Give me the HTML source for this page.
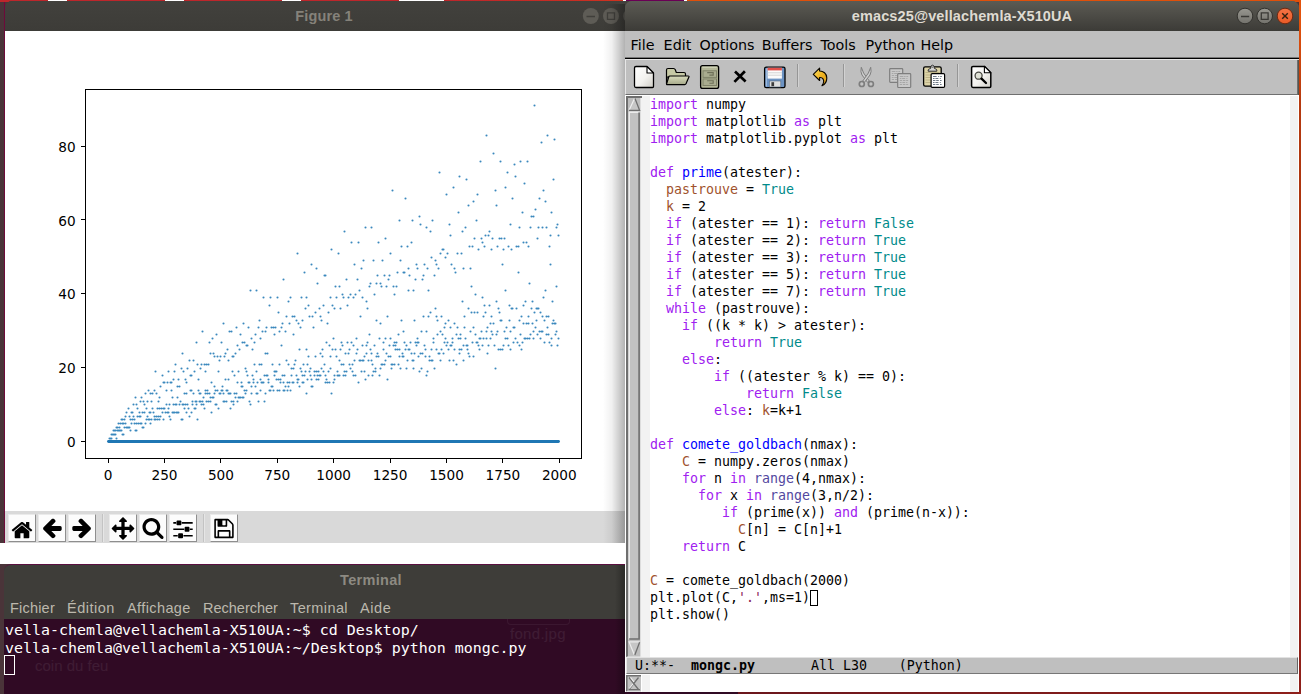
<!DOCTYPE html>
<html lang="fr">
<head>
<meta charset="utf-8">
<title>Figure 1 / emacs / Terminal</title>
<style>
*{box-sizing:border-box;margin:0;padding:0}
html,body{width:1301px;height:694px;overflow:hidden}
body{position:relative;background:#4a3439;font-family:"Liberation Sans","DejaVu Sans",sans-serif}
.abs{position:absolute}
/* desktop slivers */
#topstrip{left:0;top:0;width:1301px;height:2px;background:linear-gradient(90deg,#bd262b 0,#bd262b 48px,#fff 48px,#fff 67px,#bd262b 67px,#bd262b 165px,#fff 165px,#fff 184px,#bd262b 184px,#bd262b 282px,#fff 282px,#fff 301px,#bd262b 301px,#bd262b 399px,#fff 399px,#fff 444px,#bd262b 444px,#c92e22 585px,#d0321e 623px,#fff 623px,#fff 626px,#6a0055 626px,#6a0055 684px,#fff 684px,#fff 687px,#e0500a 687px)}
#rstrip{left:1299px;top:0;width:2px;height:694px;background:linear-gradient(#e2520c 0,#e2520c 3%,#b5390f 15%,#a02c0a 50%,#8e1f1a 100%)}
#bstrip{left:625px;top:692px;width:676px;height:2px;background:linear-gradient(90deg,#64141c,#8e1f1a)}
#lcol{left:4px;top:2px;width:1px;height:541px;background:#6e0a3a}
#whiteband{left:0;top:543px;width:626px;height:21px;background:#fff}
/* Figure window */
#fig{left:5px;top:1px;width:638px;height:542px;background:#403f3b;border-radius:7px 7px 0 0;overflow:hidden}
.tbar{left:0;top:0;width:100%;height:30px;text-align:center;font-weight:bold;font-size:14.5px;line-height:30px;letter-spacing:.12px}
#fig .tbar{background:linear-gradient(#42413d,#3d3c38);color:#85827a}
#figcanvas{left:0;top:30px;width:640px;height:480px}
#mpltb{left:0;top:510px;width:638px;height:32px;background:#d9d9d9}
.mb{position:absolute;top:3px;width:28px;height:28px;margin-left:-1px;background:#fcfcfc;border:1px solid;border-color:#eaeaea #8e8e8e #8e8e8e #eaeaea}
.mb svg{position:absolute;left:1px;top:1px;width:24px;height:24px}
.msep{position:absolute;top:3px;width:2px;height:28px;background:linear-gradient(90deg,#c3c3c3 50%,#e6e6e6 50%)}
/* Terminal */
#term{left:4px;top:564px;width:734px;height:130px;background:#3e3d39;border-radius:7px 7px 0 0;overflow:hidden;border-top:1px solid #5a1040}
#term .tbar{background:#3e3d39;color:#8d8a82;height:30px;line-height:31px}
#tmenu{left:0;top:29px;width:100%;height:25px;background:#3e3d39;color:#bcb8ad;font-size:14.5px;line-height:27px;white-space:pre}
#tmenu span{position:absolute;top:1px}
#tpurple{left:0;top:54px;width:100%;height:80px;background:#300a24}
#tbody{left:1px;top:56px;color:#fff;font-family:"DejaVu Sans Mono","Liberation Mono",monospace;font-size:14.95px;line-height:18px;white-space:pre}
.ghost{position:absolute;color:#fff;opacity:.07;font-size:15px}
/* Emacs */
#emshadow{left:603px;top:4px;width:22px;height:539px;background:linear-gradient(90deg,rgba(0,0,0,0),rgba(0,0,0,.06) 40%,rgba(0,0,0,.3))}
#emacs{left:625px;top:1px;width:674px;height:691px;background:#55544d;border-radius:7px 7px 0 0;overflow:hidden}
#emacs .tbar{background:linear-gradient(#5c5b54,#3c3b37);color:#dfdbd2}
#emenu{left:0;top:30px;width:100%;height:27px;background:#bfbfbf;font-family:"DejaVu Sans","Liberation Sans",sans-serif;font-size:14.3px;line-height:27px;color:#000;white-space:pre}
#emenu span{position:absolute;top:1px}
#eline{left:0;top:56px;width:100%;height:3px;background:linear-gradient(#777 0,#777 33.3%,#000 33.3%,#000 66.6%,#e6e6e6 66.6%)}
#etool{left:0;top:59px;width:673px;height:35px;background:#bfbfbf;border-bottom:1px solid #6f6f6f;border-right:1px solid #6f6f6f;border-left:1px solid #e6e6e6}
#ebody{left:0;top:94px;width:100%;height:597px;background:#fff}
#efringeL{left:17px;top:95px;width:8px;height:562px;background:#f2f2f2}
#efringeR{left:665px;top:95px;width:8px;height:596px;background:#f2f2f2}
#ecode{left:25px;top:95px;font-family:"DejaVu Sans Mono","Liberation Mono",monospace;font-size:13.29px;line-height:17px;white-space:pre;color:#000}
.ln{height:17px}
.k{color:#a020f0}.f{color:#0000ff}.v{color:#a0522d}.c{color:#008b8b}.s{color:#8b2252}.b{color:#5348a0}
.cur{display:inline-block;width:8px;height:16px;border:1px solid #000;vertical-align:top;margin:1px -8px 0 0}
#emode{left:1px;top:656px;width:672px;height:17px;background:#bfbfbf;border:1px solid;border-color:#e2e2e2 #666 #777 #e5e5e5;font-family:"DejaVu Sans Mono","Liberation Mono",monospace;font-size:13.29px;line-height:15px;white-space:pre;color:#000}
#emode b{font-weight:bold}
</style>
</head>
<body>
<div id="topstrip" class="abs"></div>
<div id="rstrip" class="abs"></div>
<div id="bstrip" class="abs"></div>
<div id="lcol" class="abs"></div>
<div id="whiteband" class="abs"></div>

<div id="fig" class="abs">
  <div class="tbar abs">Figure 1</div>
  <svg class="abs" style="left:575px;top:5px" width="60" height="22" viewBox="580 6 60 22"><g fill="#5e5c56"><circle cx="590.8" cy="16" r="8"/><circle cx="611" cy="16" r="8"/><circle cx="631.2" cy="16" r="8"/></g><path d="M586.5 16.5h8.5M607.5 12.8h7v6.6h-7z" stroke="#403f3b" stroke-width="1.3" fill="none"/></svg>
  <div id="figcanvas" class="abs"><svg class="plot" width="640" height="480" viewBox="0 0 640 480">
<rect width="640" height="480" fill="#fff"/>
<path d="M104.5 407.5h0M105.5 407.5h0M105.5 407.5h0M106.5 407.5h0M106.5 403.5h0M107.5 403.5h0M107.5 403.5h0M108.5 403.5h0M108.5 399.5h0M108.5 403.5h0M109.5 403.5h0M109.5 399.5h0M110.5 403.5h0M110.5 399.5h0M111.5 396.5h0M111.5 407.5h0M112.5 399.5h0M112.5 396.5h0M112.5 399.5h0M113.5 399.5h0M113.5 392.5h0M114.5 396.5h0M114.5 399.5h0M115.5 392.5h0M115.5 399.5h0M116.5 399.5h0M116.5 388.5h0M117.5 403.5h0M117.5 392.5h0M117.5 388.5h0M118.5 403.5h0M118.5 392.5h0M119.5 388.5h0M119.5 396.5h0M120.5 392.5h0M120.5 385.5h0M121.5 396.5h0M121.5 396.5h0M121.5 381.5h0M122.5 396.5h0M122.5 396.5h0M123.5 377.5h0M123.5 396.5h0M124.5 396.5h0M124.5 385.5h0M125.5 399.5h0M125.5 388.5h0M126.5 381.5h0M126.5 392.5h0M126.5 392.5h0M127.5 381.5h0M127.5 388.5h0M128.5 385.5h0M128.5 373.5h0M129.5 388.5h0M129.5 392.5h0M130.5 366.5h0M130.5 399.5h0M131.5 392.5h0M131.5 373.5h0M131.5 399.5h0M132.5 385.5h0M132.5 377.5h0M133.5 392.5h0M133.5 392.5h0M134.5 381.5h0M134.5 385.5h0M135.5 385.5h0M135.5 370.5h0M135.5 392.5h0M136.5 392.5h0M136.5 366.5h0M137.5 396.5h0M137.5 381.5h0M138.5 370.5h0M138.5 396.5h0M139.5 381.5h0M139.5 373.5h0M140.5 392.5h0M140.5 392.5h0M140.5 362.5h0M141.5 377.5h0M141.5 388.5h0M142.5 370.5h0M142.5 385.5h0M143.5 388.5h0M143.5 359.5h0M144.5 388.5h0M144.5 381.5h0M145.5 362.5h0M145.5 392.5h0M145.5 381.5h0M146.5 370.5h0M146.5 388.5h0M147.5 377.5h0M147.5 362.5h0M148.5 381.5h0M148.5 381.5h0M149.5 359.5h0M149.5 388.5h0M149.5 385.5h0M150.5 340.5h0M150.5 388.5h0M151.5 385.5h0M151.5 362.5h0M152.5 388.5h0M152.5 377.5h0M153.5 370.5h0M153.5 385.5h0M154.5 388.5h0M154.5 366.5h0M154.5 377.5h0M155.5 385.5h0M155.5 355.5h0M156.5 377.5h0M156.5 377.5h0M157.5 344.5h0M157.5 381.5h0M158.5 377.5h0M158.5 351.5h0M158.5 388.5h0M159.5 377.5h0M159.5 351.5h0M160.5 381.5h0M160.5 381.5h0M161.5 359.5h0M161.5 373.5h0M162.5 381.5h0M162.5 351.5h0M163.5 381.5h0M163.5 377.5h0M163.5 340.5h0M164.5 385.5h0M164.5 373.5h0M165.5 351.5h0M165.5 388.5h0M166.5 359.5h0M166.5 351.5h0M167.5 381.5h0M167.5 366.5h0M168.5 348.5h0M168.5 373.5h0M168.5 381.5h0M169.5 340.5h0M169.5 381.5h0M170.5 373.5h0M170.5 333.5h0M171.5 381.5h0M171.5 373.5h0M172.5 355.5h0M172.5 381.5h0M172.5 366.5h0M173.5 348.5h0M173.5 381.5h0M174.5 373.5h0M174.5 355.5h0M175.5 370.5h0M175.5 370.5h0M176.5 337.5h0M176.5 388.5h0M177.5 373.5h0M177.5 322.5h0M177.5 388.5h0M178.5 373.5h0M178.5 340.5h0M179.5 377.5h0M179.5 362.5h0M180.5 348.5h0M180.5 373.5h0M181.5 381.5h0M181.5 351.5h0M181.5 362.5h0M182.5 373.5h0M182.5 337.5h0M183.5 377.5h0M183.5 377.5h0M184.5 329.5h0M184.5 385.5h0M185.5 359.5h0M185.5 344.5h0M186.5 381.5h0M186.5 359.5h0M186.5 344.5h0M187.5 373.5h0M187.5 370.5h0M188.5 329.5h0M188.5 362.5h0M189.5 377.5h0M189.5 340.5h0M190.5 370.5h0M190.5 377.5h0M191.5 311.5h0M191.5 370.5h0M191.5 373.5h0M192.5 333.5h0M192.5 388.5h0M193.5 359.5h0M193.5 348.5h0M194.5 370.5h0M194.5 362.5h0M195.5 337.5h0M195.5 362.5h0M195.5 370.5h0M196.5 333.5h0M196.5 373.5h0M197.5 370.5h0M197.5 300.5h0M198.5 373.5h0M198.5 366.5h0M199.5 333.5h0M199.5 377.5h0M200.5 359.5h0M200.5 340.5h0M200.5 362.5h0M201.5 370.5h0M201.5 333.5h0M202.5 359.5h0M202.5 362.5h0M203.5 333.5h0M203.5 370.5h0M204.5 362.5h0M204.5 311.5h0M205.5 366.5h0M205.5 370.5h0M205.5 322.5h0M206.5 381.5h0M206.5 351.5h0M207.5 307.5h0M207.5 366.5h0M208.5 366.5h0M208.5 322.5h0M209.5 355.5h0M209.5 362.5h0M209.5 325.5h0M210.5 359.5h0M210.5 373.5h0M211.5 303.5h0M211.5 373.5h0M212.5 359.5h0M212.5 325.5h0M213.5 377.5h0M213.5 340.5h0M214.5 329.5h0M214.5 362.5h0M214.5 362.5h0M215.5 325.5h0M215.5 362.5h0M216.5 359.5h0M216.5 311.5h0M217.5 355.5h0M217.5 359.5h0M218.5 292.5h0M218.5 370.5h0M218.5 362.5h0M219.5 325.5h0M219.5 370.5h0M220.5 348.5h0M220.5 322.5h0M221.5 370.5h0M221.5 359.5h0M222.5 318.5h0M222.5 359.5h0M223.5 348.5h0M223.5 329.5h0M223.5 362.5h0M224.5 362.5h0M224.5 300.5h0M225.5 377.5h0M225.5 362.5h0M226.5 300.5h0M226.5 370.5h0M227.5 340.5h0M227.5 325.5h0M228.5 373.5h0M228.5 370.5h0M228.5 325.5h0M229.5 344.5h0M229.5 362.5h0M230.5 322.5h0M230.5 366.5h0M231.5 362.5h0M231.5 296.5h0M232.5 370.5h0M232.5 351.5h0M232.5 314.5h0M233.5 366.5h0M233.5 340.5h0M234.5 318.5h0M234.5 366.5h0M235.5 366.5h0M235.5 303.5h0M236.5 351.5h0M236.5 355.5h0M237.5 311.5h0M237.5 366.5h0M237.5 355.5h0M238.5 292.5h0M238.5 366.5h0M239.5 359.5h0M239.5 311.5h0M240.5 362.5h0M240.5 337.5h0M241.5 314.5h0M241.5 359.5h0M241.5 340.5h0M242.5 314.5h0M242.5 344.5h0M243.5 351.5h0M243.5 296.5h0M244.5 370.5h0M244.5 351.5h0M245.5 259.5h0M245.5 373.5h0M246.5 362.5h0M246.5 307.5h0M246.5 355.5h0M247.5 344.5h0M247.5 318.5h0M248.5 348.5h0M248.5 351.5h0M249.5 311.5h0M249.5 333.5h0M250.5 355.5h0M250.5 303.5h0M251.5 362.5h0M251.5 340.5h0M251.5 259.5h0M252.5 362.5h0M252.5 351.5h0M253.5 296.5h0M253.5 370.5h0M254.5 333.5h0M254.5 289.5h0M255.5 359.5h0M255.5 348.5h0M255.5 307.5h0M256.5 333.5h0M256.5 351.5h0M257.5 300.5h0M257.5 351.5h0M258.5 351.5h0M258.5 266.5h0M259.5 370.5h0M259.5 344.5h0M260.5 300.5h0M260.5 362.5h0M260.5 322.5h0M261.5 296.5h0M261.5 344.5h0M262.5 344.5h0M262.5 322.5h0M263.5 351.5h0M263.5 348.5h0M264.5 274.5h0M264.5 359.5h0M265.5 359.5h0M265.5 266.5h0M265.5 359.5h0M266.5 355.5h0M266.5 296.5h0M267.5 355.5h0M267.5 333.5h0M268.5 296.5h0M268.5 359.5h0M269.5 340.5h0M269.5 303.5h0M269.5 344.5h0M270.5 340.5h0M270.5 296.5h0M271.5 348.5h0M271.5 340.5h0M272.5 266.5h0M272.5 359.5h0M273.5 348.5h0M273.5 281.5h0M274.5 359.5h0M274.5 333.5h0M274.5 300.5h0M275.5 348.5h0M275.5 351.5h0M276.5 296.5h0M276.5 314.5h0M277.5 344.5h0M277.5 292.5h0M278.5 351.5h0M278.5 359.5h0M278.5 248.5h0M279.5 359.5h0M279.5 344.5h0M280.5 300.5h0M280.5 355.5h0M281.5 329.5h0M281.5 285.5h0M282.5 351.5h0M282.5 359.5h0M283.5 270.5h0M283.5 333.5h0M283.5 355.5h0M284.5 292.5h0M284.5 351.5h0M285.5 359.5h0M285.5 266.5h0M286.5 344.5h0M286.5 337.5h0M287.5 285.5h0M287.5 351.5h0M288.5 337.5h0M288.5 303.5h0M288.5 351.5h0M289.5 333.5h0M289.5 285.5h0M290.5 329.5h0M290.5 329.5h0M291.5 289.5h0M291.5 344.5h0M292.5 351.5h0M292.5 222.5h0M292.5 348.5h0M293.5 348.5h0M293.5 292.5h0M294.5 355.5h0M294.5 318.5h0M295.5 296.5h0M295.5 337.5h0M296.5 340.5h0M296.5 266.5h0M297.5 344.5h0M297.5 351.5h0M297.5 289.5h0M298.5 351.5h0M298.5 333.5h0M299.5 241.5h0M299.5 344.5h0M300.5 340.5h0M300.5 277.5h0M301.5 362.5h0M301.5 318.5h0M301.5 266.5h0M302.5 333.5h0M302.5 348.5h0M303.5 274.5h0M303.5 325.5h0M304.5 340.5h0M304.5 285.5h0M305.5 337.5h0M305.5 344.5h0M306.5 233.5h0M306.5 355.5h0M306.5 348.5h0M307.5 285.5h0M307.5 355.5h0M308.5 296.5h0M308.5 296.5h0M309.5 340.5h0M309.5 344.5h0M310.5 281.5h0M310.5 325.5h0M311.5 340.5h0M311.5 237.5h0M311.5 348.5h0M312.5 344.5h0M312.5 252.5h0M313.5 348.5h0M313.5 340.5h0M314.5 277.5h0M314.5 344.5h0M315.5 322.5h0M315.5 285.5h0M315.5 344.5h0M316.5 337.5h0M316.5 289.5h0M317.5 318.5h0M317.5 325.5h0M318.5 274.5h0M318.5 340.5h0M319.5 333.5h0M319.5 244.5h0M320.5 351.5h0M320.5 344.5h0M320.5 244.5h0M321.5 348.5h0M321.5 311.5h0M322.5 292.5h0M322.5 351.5h0M323.5 340.5h0M323.5 281.5h0M324.5 314.5h0M324.5 351.5h0M325.5 266.5h0M325.5 337.5h0M325.5 325.5h0M326.5 218.5h0M326.5 362.5h0M327.5 318.5h0M327.5 274.5h0M328.5 351.5h0M328.5 307.5h0M329.5 277.5h0M329.5 344.5h0M329.5 348.5h0M330.5 255.5h0M330.5 318.5h0M331.5 325.5h0M331.5 266.5h0M332.5 344.5h0M332.5 340.5h0M333.5 222.5h0M333.5 344.5h0M334.5 329.5h0M334.5 255.5h0M334.5 344.5h0M335.5 318.5h0M335.5 277.5h0M336.5 333.5h0M336.5 311.5h0M337.5 263.5h0M337.5 314.5h0M338.5 333.5h0M338.5 266.5h0M338.5 344.5h0M339.5 340.5h0M339.5 200.5h0M340.5 344.5h0M340.5 322.5h0M341.5 248.5h0M341.5 340.5h0M342.5 311.5h0M342.5 274.5h0M343.5 322.5h0M343.5 322.5h0M343.5 266.5h0M344.5 318.5h0M344.5 333.5h0M345.5 263.5h0M345.5 337.5h0M346.5 311.5h0M346.5 211.5h0M347.5 340.5h0M347.5 333.5h0M348.5 266.5h0M348.5 344.5h0M348.5 314.5h0M349.5 233.5h0M349.5 329.5h0M350.5 344.5h0M350.5 263.5h0M351.5 307.5h0M351.5 322.5h0M352.5 248.5h0M352.5 318.5h0M352.5 318.5h0M353.5 211.5h0M353.5 351.5h0M354.5 329.5h0M354.5 259.5h0M355.5 329.5h0M355.5 285.5h0M356.5 237.5h0M356.5 340.5h0M357.5 329.5h0M357.5 266.5h0M357.5 314.5h0M358.5 329.5h0M358.5 229.5h0M359.5 325.5h0M359.5 340.5h0M360.5 196.5h0M360.5 348.5h0M361.5 322.5h0M361.5 270.5h0M361.5 314.5h0M362.5 311.5h0M362.5 277.5h0M363.5 344.5h0M363.5 329.5h0M364.5 255.5h0M364.5 303.5h0M365.5 318.5h0M365.5 252.5h0M366.5 322.5h0M366.5 329.5h0M366.5 196.5h0M367.5 344.5h0M367.5 333.5h0M368.5 229.5h0M368.5 340.5h0M369.5 314.5h0M369.5 263.5h0M370.5 337.5h0M370.5 340.5h0M371.5 252.5h0M371.5 289.5h0M371.5 325.5h0M372.5 244.5h0M372.5 322.5h0M373.5 325.5h0M373.5 211.5h0M374.5 344.5h0M374.5 307.5h0M375.5 252.5h0M375.5 337.5h0M375.5 292.5h0M376.5 255.5h0M376.5 333.5h0M377.5 333.5h0M377.5 229.5h0M378.5 311.5h0M378.5 318.5h0M379.5 244.5h0M379.5 333.5h0M380.5 329.5h0M380.5 207.5h0M380.5 307.5h0M381.5 322.5h0M381.5 255.5h0M382.5 348.5h0M382.5 285.5h0M383.5 248.5h0M383.5 325.5h0M384.5 314.5h0M384.5 244.5h0M385.5 307.5h0M385.5 325.5h0M385.5 222.5h0M386.5 337.5h0M386.5 333.5h0M387.5 159.5h0M387.5 333.5h0M388.5 314.5h0M388.5 255.5h0M389.5 333.5h0M389.5 311.5h0M389.5 263.5h0M390.5 314.5h0M390.5 318.5h0M391.5 255.5h0M391.5 311.5h0M392.5 318.5h0M392.5 241.5h0M393.5 333.5h0M393.5 303.5h0M394.5 189.5h0M394.5 325.5h0M394.5 318.5h0M395.5 229.5h0M395.5 337.5h0M396.5 289.5h0M396.5 215.5h0M397.5 322.5h0M397.5 325.5h0M398.5 241.5h0M398.5 300.5h0M398.5 325.5h0M399.5 241.5h0M399.5 311.5h0M400.5 318.5h0M400.5 167.5h0M401.5 337.5h0M401.5 314.5h0M402.5 215.5h0M402.5 329.5h0M403.5 259.5h0M403.5 237.5h0M403.5 318.5h0M404.5 318.5h0M404.5 244.5h0M405.5 311.5h0M405.5 311.5h0M406.5 211.5h0M406.5 322.5h0M407.5 329.5h0M407.5 189.5h0M408.5 329.5h0M408.5 337.5h0M408.5 259.5h0M409.5 322.5h0M409.5 289.5h0M410.5 248.5h0M410.5 311.5h0M411.5 314.5h0M411.5 233.5h0M412.5 307.5h0M412.5 311.5h0M412.5 237.5h0M413.5 325.5h0M413.5 311.5h0M414.5 185.5h0M414.5 340.5h0M415.5 322.5h0M415.5 193.5h0M416.5 337.5h0M416.5 300.5h0M417.5 248.5h0M417.5 322.5h0M417.5 322.5h0M418.5 244.5h0M418.5 285.5h0M419.5 314.5h0M419.5 233.5h0M420.5 325.5h0M420.5 318.5h0M421.5 196.5h0M421.5 344.5h0M421.5 300.5h0M422.5 237.5h0M422.5 340.5h0M423.5 285.5h0M423.5 259.5h0M424.5 329.5h0M424.5 325.5h0M425.5 200.5h0M425.5 281.5h0M426.5 318.5h0M426.5 226.5h0M426.5 329.5h0M427.5 329.5h0M427.5 189.5h0M428.5 311.5h0M428.5 307.5h0M429.5 244.5h0M429.5 337.5h0M430.5 277.5h0M430.5 229.5h0M431.5 318.5h0M431.5 285.5h0M431.5 233.5h0M432.5 289.5h0M432.5 303.5h0M433.5 237.5h0M433.5 322.5h0M434.5 322.5h0M434.5 141.5h0M435.5 329.5h0M435.5 300.5h0M435.5 222.5h0M436.5 318.5h0M436.5 285.5h0M437.5 218.5h0M437.5 303.5h0M438.5 322.5h0M438.5 218.5h0M439.5 296.5h0M439.5 311.5h0M440.5 226.5h0M440.5 307.5h0M440.5 292.5h0M441.5 163.5h0M441.5 314.5h0M442.5 311.5h0M442.5 222.5h0M443.5 318.5h0M443.5 289.5h0M444.5 193.5h0M444.5 329.5h0M445.5 314.5h0M445.5 204.5h0M445.5 296.5h0M446.5 314.5h0M446.5 233.5h0M447.5 307.5h0M447.5 311.5h0M448.5 156.5h0M448.5 329.5h0M449.5 292.5h0M449.5 237.5h0M449.5 318.5h0M450.5 241.5h0M450.5 241.5h0M451.5 333.5h0M451.5 303.5h0M452.5 222.5h0M452.5 296.5h0M453.5 307.5h0M453.5 181.5h0M454.5 322.5h0M454.5 318.5h0M454.5 145.5h0M455.5 303.5h0M455.5 307.5h0M456.5 222.5h0M456.5 318.5h0M457.5 270.5h0M457.5 200.5h0M458.5 329.5h0M458.5 314.5h0M458.5 237.5h0M459.5 296.5h0M459.5 285.5h0M460.5 196.5h0M460.5 307.5h0M461.5 314.5h0M461.5 148.5h0M462.5 318.5h0M462.5 314.5h0M463.5 174.5h0M463.5 322.5h0M463.5 277.5h0M464.5 215.5h0M464.5 325.5h0M465.5 300.5h0M465.5 237.5h0M466.5 255.5h0M466.5 281.5h0M467.5 215.5h0M467.5 311.5h0M468.5 296.5h0M468.5 170.5h0M468.5 325.5h0M469.5 281.5h0M469.5 207.5h0M470.5 303.5h0M470.5 263.5h0M471.5 189.5h0M471.5 311.5h0M472.5 311.5h0M472.5 163.5h0M472.5 281.5h0M473.5 314.5h0M473.5 218.5h0M474.5 318.5h0M474.5 307.5h0M475.5 130.5h0M475.5 307.5h0M476.5 300.5h0M476.5 207.5h0M477.5 314.5h0M477.5 266.5h0M477.5 211.5h0M478.5 307.5h0M478.5 285.5h0M479.5 215.5h0M479.5 274.5h0M480.5 281.5h0M480.5 204.5h0M481.5 307.5h0M481.5 300.5h0M481.5 104.5h0M482.5 322.5h0M482.5 296.5h0M483.5 204.5h0M483.5 314.5h0M484.5 274.5h0M484.5 200.5h0M485.5 292.5h0M485.5 307.5h0M486.5 218.5h0M486.5 285.5h0M486.5 300.5h0M487.5 207.5h0M487.5 303.5h0M488.5 292.5h0M488.5 122.5h0M489.5 314.5h0M489.5 314.5h0M490.5 159.5h0M490.5 337.5h0M491.5 270.5h0M491.5 174.5h0M491.5 303.5h0M492.5 300.5h0M492.5 215.5h0M493.5 277.5h0M493.5 318.5h0M494.5 207.5h0M494.5 281.5h0M495.5 289.5h0M495.5 130.5h0M495.5 318.5h0M496.5 289.5h0M496.5 207.5h0M497.5 318.5h0M497.5 233.5h0M498.5 218.5h0M498.5 314.5h0M499.5 300.5h0M499.5 207.5h0M500.5 259.5h0M500.5 307.5h0M500.5 156.5h0M501.5 296.5h0M501.5 296.5h0M502.5 141.5h0M502.5 307.5h0M503.5 314.5h0M503.5 215.5h0M504.5 289.5h0M504.5 274.5h0M505.5 193.5h0M505.5 318.5h0M505.5 300.5h0M506.5 218.5h0M506.5 277.5h0M507.5 277.5h0M507.5 167.5h0M508.5 296.5h0M508.5 311.5h0M509.5 133.5h0M509.5 296.5h0M509.5 296.5h0M510.5 145.5h0M510.5 307.5h0M511.5 277.5h0M511.5 215.5h0M512.5 311.5h0M512.5 311.5h0M513.5 215.5h0M513.5 241.5h0M514.5 314.5h0M514.5 196.5h0M514.5 289.5h0M515.5 303.5h0M515.5 130.5h0M516.5 318.5h0M516.5 285.5h0M517.5 181.5h0M517.5 311.5h0M518.5 274.5h0M518.5 211.5h0M518.5 292.5h0M519.5 307.5h0M519.5 152.5h0M520.5 270.5h0M520.5 307.5h0M521.5 211.5h0M521.5 292.5h0M522.5 307.5h0M522.5 130.5h0M523.5 285.5h0M523.5 292.5h0M523.5 215.5h0M524.5 307.5h0M524.5 252.5h0M525.5 196.5h0M525.5 303.5h0M526.5 277.5h0M526.5 185.5h0M527.5 270.5h0M527.5 292.5h0M528.5 185.5h0M528.5 300.5h0M528.5 307.5h0M529.5 74.5h0M529.5 281.5h0M530.5 296.5h0M530.5 178.5h0M531.5 289.5h0M531.5 277.5h0M532.5 207.5h0M532.5 277.5h0M532.5 303.5h0M533.5 196.5h0M533.5 277.5h0M534.5 300.5h0M534.5 167.5h0M535.5 307.5h0M535.5 281.5h0M536.5 111.5h0M536.5 300.5h0M537.5 285.5h0M537.5 196.5h0M537.5 300.5h0M538.5 266.5h0M538.5 159.5h0M539.5 311.5h0M539.5 289.5h0M540.5 170.5h0M540.5 259.5h0M541.5 303.5h0M541.5 196.5h0M541.5 285.5h0M542.5 296.5h0M542.5 104.5h0M543.5 303.5h0M543.5 285.5h0M544.5 215.5h0M544.5 311.5h0M545.5 233.5h0M545.5 204.5h0M546.5 314.5h0M546.5 307.5h0M546.5 181.5h0M547.5 270.5h0M547.5 292.5h0M548.5 148.5h0M548.5 289.5h0M549.5 292.5h0M549.5 108.5h0M550.5 303.5h0M550.5 292.5h0M551.5 196.5h0M551.5 300.5h0M551.5 255.5h0M552.5 193.5h0M552.5 314.5h0M553.5 307.5h0M553.5 204.5h0" stroke="#1f77b4" stroke-width="2.1" stroke-linecap="round" fill="none" opacity=".88"/>
<path d="M103.5 410.5H553.5" stroke="#1f77b4" stroke-width="2.9" stroke-linecap="round" fill="none"/>
<rect x="80.5" y="58.5" width="496" height="369" fill="none" stroke="#000" stroke-width="1"/>
<path d="M103.5 428v4M159.5 428v4M215.5 428v4M272.5 428v4M328.5 428v4M385.5 428v4M441.5 428v4M497.5 428v4M554.5 428v4M80 410.5h-4M80 336.5h-4M80 262.5h-4M80 188.5h-4M80 115.5h-4" stroke="#000" stroke-width="1" fill="none"/>
<g font-family="'DejaVu Sans','Liberation Sans',sans-serif" font-size="13.65" fill="#000">
<text x="103.1" y="448.8" text-anchor="middle">0</text>
<text x="159.5" y="448.8" text-anchor="middle">250</text>
<text x="215.9" y="448.8" text-anchor="middle">500</text>
<text x="272.3" y="448.8" text-anchor="middle">750</text>
<text x="328.7" y="448.8" text-anchor="middle">1000</text>
<text x="385.1" y="448.8" text-anchor="middle">1250</text>
<text x="441.5" y="448.8" text-anchor="middle">1500</text>
<text x="497.9" y="448.8" text-anchor="middle">1750</text>
<text x="554.3" y="448.8" text-anchor="middle">2000</text>
<text x="70.6" y="416.0" text-anchor="end">0</text>
<text x="70.6" y="342.2" text-anchor="end">20</text>
<text x="70.6" y="268.3" text-anchor="end">40</text>
<text x="70.6" y="194.5" text-anchor="end">60</text>
<text x="70.6" y="120.6" text-anchor="end">80</text>
</g></svg></div>
  <div id="mpltb" class="abs"><div class="mb" style="left:4px"><svg viewBox="0 0 72 72"><path d="M57.9 45.9C57.9 45.9 57.9 45.8 57.8 45.7L36 27.7L14.2 45.7C14.2 45.8 14.1 45.9 14.1 45.9L14.1 64.2C14.1 65.5 15.2 66.6 16.6 66.6L31.1 66.6L31.1 52L40.9 52L40.9 66.6L55.4 66.6C56.8 66.6 57.9 65.5 57.9 64.2zM66.3 43.3C66.7 42.8 66.7 42 66.2 41.6L57.9 34.7L57.9 19.2C57.9 18.5 57.3 18 56.6 18L49.4 18C48.7 18 48.1 18.5 48.1 19.2L48.1 26.6L38.9 18.9C37.3 17.6 34.7 17.6 33.1 18.9L5.8 41.6C5.3 42 5.3 42.8 5.7 43.3L8 46.1C8.2 46.4 8.5 46.5 8.8 46.5C9.2 46.6 9.5 46.5 9.7 46.3L36 24.4L62.3 46.3C62.5 46.5 62.7 46.5 63.1 46.5C63.1 46.5 63.1 46.5 63.2 46.5C63.5 46.5 63.8 46.4 64 46.1z"/></svg></div>
<div class="mb" style="left:34px"><svg viewBox="0 0 72 72"><path d="M65.1 35C65.1 32.4 63.4 30.2 60.7 30.2L34 30.2L45.1 19C46 18.1 46.6 16.9 46.6 15.6C46.6 14.3 46 13 45.1 12.1L42.3 9.3C41.3 8.4 40.1 7.9 38.8 7.9C37.6 7.9 36.3 8.4 35.4 9.3L10.7 34C9.8 34.9 9.3 36.1 9.3 37.4C9.3 38.7 9.8 40 10.7 40.9L35.4 65.6C36.3 66.5 37.6 67 38.8 67C40.1 67 41.4 66.5 42.3 65.6L45.1 62.7C46 61.8 46.6 60.6 46.6 59.3C46.6 58 46 56.8 45.1 55.9L34 44.7L60.7 44.7C63.4 44.7 65.1 42.4 65.1 39.9z"/></svg></div>
<div class="mb" style="left:64px"><svg viewBox="0 0 72 72"><path d="M62.7 37.4C62.7 36.1 62.2 34.9 61.3 34L36.6 9.3C35.7 8.4 34.4 7.9 33.2 7.9C31.9 7.9 30.6 8.4 29.7 9.3L26.9 12.2C26 13 25.4 14.3 25.4 15.6C25.4 16.9 26 18.1 26.9 19L38 30.2L11.3 30.2C8.6 30.2 6.9 32.4 6.9 35L6.9 39.9C6.9 42.4 8.6 44.7 11.3 44.7L38 44.7L26.9 55.8C26 56.8 25.4 58 25.4 59.3C25.4 60.6 26 61.8 26.9 62.7L29.7 65.6C30.6 66.5 31.9 67 33.2 67C34.4 67 35.7 66.5 36.6 65.6L61.3 40.9C62.2 40 62.7 38.7 62.7 37.4"/></svg></div>
<div class="mb" style="left:105px"><svg viewBox="0 0 72 72"><path d="M70 37.4C70 36.8 69.7 36.2 69.3 35.7L59.6 26C59.1 25.6 58.5 25.3 57.9 25.3C56.5 25.3 55.4 26.4 55.4 27.7L55.4 32.6L40.9 32.6L40.9 18L45.7 18C47 18 48.1 16.9 48.1 15.6C48.1 14.9 47.9 14.3 47.4 13.9L37.7 4.2C37.3 3.7 36.6 3.4 36 3.4C35.4 3.4 34.7 3.7 34.3 4.2L24.6 13.9C24.1 14.3 23.9 14.9 23.9 15.6C23.9 16.9 25 18 26.3 18L31.1 18L31.1 32.6L16.6 32.6L16.6 27.7C16.6 26.4 15.5 25.3 14.1 25.3C13.5 25.3 12.9 25.6 12.4 26L2.7 35.7C2.3 36.2 2 36.8 2 37.4C2 38.1 2.3 38.7 2.7 39.2L12.4 48.9C12.9 49.3 13.5 49.6 14.1 49.6C15.5 49.6 16.6 48.5 16.6 47.2L16.6 42.3L31.1 42.3L31.1 56.9L26.3 56.9C25 56.9 23.9 58 23.9 59.3C23.9 59.9 24.1 60.5 24.6 61L34.3 70.7C34.7 71.2 35.4 71.4 36 71.4C36.6 71.4 37.3 71.2 37.7 70.7L47.4 61C47.9 60.5 48.1 59.9 48.1 59.3C48.1 58 47 56.9 45.7 56.9L40.9 56.9L40.9 42.3L55.4 42.3L55.4 47.2C55.4 48.5 56.5 49.6 57.9 49.6C58.5 49.6 59.1 49.3 59.6 48.9L69.3 39.2C69.7 38.7 70 38.1 70 37.4"/></svg></div>
<div class="mb" style="left:135px"><svg viewBox="0 0 72 72"><path d="M48.1 32.6C48.1 42 40.5 49.6 31.1 49.6C21.8 49.6 14.1 42 14.1 32.6C14.1 23.2 21.8 15.6 31.1 15.6C40.5 15.6 48.1 23.2 48.1 32.6M67.6 64.2C67.6 62.9 67 61.6 66.2 60.7L53.2 47.7C56.2 43.3 57.9 38 57.9 32.6C57.9 17.8 45.9 5.9 31.1 5.9C16.4 5.9 4.4 17.8 4.4 32.6C4.4 47.3 16.4 59.3 31.1 59.3C36.5 59.3 41.8 57.7 46.3 54.6L59.3 67.6C60.2 68.5 61.4 69 62.7 69C65.4 69 67.6 66.8 67.6 64.2"/></svg></div>
<div class="mb" style="left:165px"><svg viewBox="0 0 72 72"><path d="M20.2 56.9L6.9 56.9L6.9 61.7L20.2 61.7zM33.6 52L23.9 52C22.5 52 21.4 53.1 21.4 54.4L21.4 64.2C21.4 65.5 22.5 66.6 23.9 66.6L33.6 66.6C34.9 66.6 36 65.5 36 64.2L36 54.4C36 53.1 34.9 52 33.6 52M39.6 37.4L6.9 37.4L6.9 42.3L39.6 42.3zM15.4 18L6.9 18L6.9 22.9L15.4 22.9zM65.1 56.9L37.2 56.9L37.2 61.7L65.1 61.7zM28.7 13.2L19 13.2C17.7 13.2 16.6 14.3 16.6 15.6L16.6 25.3C16.6 26.6 17.7 27.7 19 27.7L28.7 27.7C30 27.7 31.1 26.6 31.1 25.3L31.1 15.6C31.1 14.3 30 13.2 28.7 13.2M53 32.6L43.3 32.6C42 32.6 40.9 33.7 40.9 35L40.9 44.7C40.9 46.1 42 47.2 43.3 47.2L53 47.2C54.3 47.2 55.4 46.1 55.4 44.7L55.4 35C55.4 33.7 54.3 32.6 53 32.6M65.1 37.4L56.6 37.4L56.6 42.3L65.1 42.3zM65.1 18L32.4 18L32.4 22.9L65.1 22.9z"/></svg></div>
<div class="mb" style="left:206px"><svg viewBox="0 0 72 72"><path d="M21.4 61.7L21.4 47.2L50.6 47.2L50.6 61.7zM55.4 61.7L55.4 45.9C55.4 43.9 53.8 42.3 51.8 42.3L20.2 42.3C18.2 42.3 16.6 43.9 16.6 45.9L16.6 61.7L11.7 61.7L11.7 13.2L16.6 13.2L16.6 28.9C16.6 31 18.2 32.6 20.2 32.6L42.1 32.6C44.1 32.6 45.7 31 45.7 28.9L45.7 13.2C46.5 13.2 48 13.8 48.5 14.3L59.1 25C59.6 25.5 60.3 27 60.3 27.7L60.3 61.7zM40.9 26.5C40.9 27.2 40.3 27.7 39.6 27.7L32.4 27.7C31.7 27.7 31.1 27.2 31.1 26.5L31.1 14.4C31.1 13.7 31.7 13.2 32.4 13.2L39.6 13.2C40.3 13.2 40.9 13.7 40.9 14.4zM65.1 27.7C65.1 25.7 64 22.9 62.6 21.5L51.9 10.9C50.5 9.4 47.7 8.3 45.7 8.3L10.5 8.3C8.5 8.3 6.9 9.9 6.9 11.9L6.9 62.9C6.9 65 8.5 66.6 10.5 66.6L61.5 66.6C63.5 66.6 65.1 65 65.1 62.9z"/></svg></div>
<div class="msep" style="left:97px"></div><div class="msep" style="left:198px"></div></div>
</div>

<div id="term" class="abs">
  <div class="tbar abs" style="letter-spacing:.3px">Terminal</div>
  <div id="tmenu" class="abs"><span style="left:6px;letter-spacing:.2px">Fichier</span><span style="left:63px;letter-spacing:.5px">Édition</span><span style="left:123px;letter-spacing:.4px">Affichage</span><span style="left:199px">Rechercher</span><span style="left:286px;letter-spacing:.4px">Terminal</span><span style="left:356px;letter-spacing:.6px">Aide</span></div>
  <div id="tpurple" class="abs"></div>
  <div class="abs" style="left:503px;top:54px;width:63px;height:6px;border:1px solid rgba(255,255,255,.055);border-top:0;border-radius:0 0 4px 4px"></div>
  <div class="ghost" style="left:506px;top:60px;letter-spacing:.3px">fond.jpg</div>
  <div class="ghost" style="left:31px;top:92px">coin du feu</div>
  <div id="tbody" class="abs">vella-chemla@vellachemla-X510UA:~$ cd Desktop/
vella-chemla@vellachemla-X510UA:~/Desktop$ python mongc.py</div>
  <div class="abs" style="left:0;top:90px;width:11px;height:20px;border:1px solid #fff"></div>
</div>

<div id="emshadow" class="abs"></div>
<div class="abs" style="left:615px;top:565px;width:10px;height:129px;background:linear-gradient(90deg,rgba(0,0,0,0),rgba(0,0,0,.3))"></div>
<div id="emacs" class="abs">
  <div class="tbar abs">emacs25@vellachemla-X510UA</div>
  <svg class="abs" style="left:605px;top:5px" width="64" height="22" viewBox="1230 6 64 22"><defs><linearGradient id="gb" x1="0" y1="0" x2="0" y2="1"><stop offset="0" stop-color="#989790"/><stop offset="1" stop-color="#73726c"/></linearGradient><linearGradient id="gc" x1="0" y1="0" x2="0" y2="1"><stop offset="0" stop-color="#f47446"/><stop offset="1" stop-color="#ea5a26"/></linearGradient></defs><g stroke="#33322e" stroke-width="1"><circle cx="1245" cy="16" r="7.8" fill="url(#gb)"/><circle cx="1264.7" cy="16" r="7.8" fill="url(#gb)"/><circle cx="1285" cy="16" r="7.8" fill="url(#gc)" stroke="#6e2a12"/></g><path d="M1241 16.5h8.2M1261.3 12.8h6.8v6.6h-6.8z" stroke="#3a3935" stroke-width="1.3" fill="none"/><path d="M1282.2 13.2l5.6 5.6m0-5.6l-5.6 5.6" stroke="#33200f" stroke-width="1.4" fill="none"/></svg>
  <div id="emenu" class="abs"><span style="left:5.5px">File</span><span style="left:38.6px">Edit</span><span style="left:74.4px">Options</span><span style="left:136.7px">Buffers</span><span style="left:195.5px">Tools</span><span style="left:240.4px">Python</span><span style="left:295.4px">Help</span></div>
  <div id="eline" class="abs"></div>
  <div id="etool" class="abs"><svg class="abs" style="left:-1px;top:0" width="674" height="34" viewBox="625 60 674 34">
<defs>
<linearGradient id="gp" x1="0" y1="0" x2="1" y2="1"><stop offset="0" stop-color="#fff"/><stop offset=".55" stop-color="#f3f2ef"/><stop offset="1" stop-color="#cfcdc6"/></linearGradient>
<linearGradient id="gf" x1="0" y1="0" x2="0" y2="1"><stop offset="0" stop-color="#d9dcbd"/><stop offset="1" stop-color="#a6a98a"/></linearGradient>
<linearGradient id="gu" x1="0" y1="0" x2="1" y2="1"><stop offset="0" stop-color="#fbe36a"/><stop offset=".5" stop-color="#f0b422"/><stop offset="1" stop-color="#d99a1c"/></linearGradient>
</defs>
<!-- new file -->
<path d="M636 66.5H647L653.5 73V86.5Q653.5 87.5 652.5 87.5H636Q634.5 87.5 634.5 86V68Q634.5 66.5 636 66.5Z" fill="url(#gp)" stroke="#000" stroke-width="1.3" stroke-linejoin="round"/>
<path d="M647 66.5V73H653.5Z" fill="#fff" stroke="#000" stroke-width="1.1" stroke-linejoin="round"/>
<!-- open folder -->
<path d="M666.5 84V70Q666.5 68.5 668 68.5H673.5Q674.8 68.5 675.3 69.8L676.3 72.5H684Q685.5 72.5 685.5 74V77H667Z" fill="#c6c9a6" stroke="#000" stroke-width="1.2" stroke-linejoin="round"/>
<path d="M669.8 76H688.2Q689.3 76 688.9 77L686 83.8Q685.6 84.6 684.7 84.6H667.4Q666.3 84.6 666.7 83.6L668.8 76.8Q669 76 669.8 76Z" fill="url(#gf)" stroke="#000" stroke-width="1.2" stroke-linejoin="round"/>
<!-- dired cabinet -->
<rect x="700.6" y="65.6" width="18" height="22.8" rx="2" fill="#b4b798" stroke="#000" stroke-width="1.3"/>
<path d="M702.3 67.3H716.8" stroke="#d3d6bc" stroke-width="1" fill="none"/>
<rect x="703" y="70.8" width="13.5" height="6.6" fill="#a9ac8f" stroke="#7f8168" stroke-width="1"/>
<rect x="703" y="78.9" width="13.5" height="6.6" fill="#a9ac8f" stroke="#7f8168" stroke-width="1"/>
<path d="M707.2 72.6H713.2V75.1H709.4M707.2 80.8H713.2V83.2H709.4" fill="none" stroke="#6d6f58" stroke-width="1.1"/>
<!-- kill buffer X -->
<path d="M735 71.6L745.6 81.6M744.9 71.3L734.4 81.9" stroke="#000" stroke-width="2.7" fill="none"/>
<!-- save floppy -->
<rect x="764.6" y="67.1" width="20.4" height="20.5" rx="1.6" fill="#6c93c3" stroke="#000" stroke-width="1.3"/>
<rect x="767.6" y="67.8" width="14.3" height="10.8" fill="#fbfbfb"/>
<rect x="767.6" y="67.8" width="14.3" height="2.6" fill="#e2514b"/>
<path d="M767.6 72.8H781.9M767.6 75.2H781.9" stroke="#cfcfcf" stroke-width=".9"/>
<path d="M766.3 68.5V86.5" stroke="#a9c3e3" stroke-width="1"/>
<rect x="769.4" y="81" width="11.4" height="6" fill="#dedede" stroke="#55697f" stroke-width=".6"/>
<rect x="771.4" y="82.2" width="2.7" height="4" fill="#3c3c3c"/>
<!-- separators -->
<path d="M797.5 64V87M843.5 64V87M957.5 64V87" stroke="#969696" stroke-width="1"/>
<path d="M798.5 64V87M844.5 64V87M958.5 64V87" stroke="#d2d2d2" stroke-width="1"/>
<!-- undo -->
<path d="M813.3 74.3L819.6 68.2V71C823.2 71 826.8 73.4 826.8 78C826.8 81.6 825 84.4 822 85.7C823.9 83 824.1 80.6 823 78.9C822.2 77.7 821 77.4 819.6 77.6V80.5Z" fill="url(#gu)" stroke="#0c0800" stroke-width="1.15" stroke-linejoin="round"/>
<!-- cut (disabled) -->
<g fill="#cdcdcd" stroke="#7e7e7e" stroke-width="1" stroke-linejoin="round">
<path d="M861.3 67.3Q860.2 72 862 75L867.6 82.4L869.4 81.2L863.6 73Z"/>
<path d="M870.7 67.3Q871.8 72 870 75L864.4 82.4L862.6 81.2L868.4 73Z"/>
<circle cx="861.8" cy="84" r="2.5" fill="#c4c4c4" stroke-width="1.7"/>
<circle cx="870.9" cy="84" r="2.5" fill="#c4c4c4" stroke-width="1.7"/>
</g>
<!-- copy (disabled) -->
<g fill="#c9c9c9" stroke="#7e7e7e" stroke-width="1.2">
<rect x="889.7" y="68.6" width="13" height="13.8" rx=".8"/>
<path d="M891.8 71.5h3.6m.8 0h1.4m.8 0h1.8M891.8 73.5h1.6m.8 0h3m1.2 0h1M891.8 75.5h2.4m.8 0h2.4m.8 0h2M891.8 77.5h1.8m.8 0h2.8m1 0h1.2M891.8 79.5h2.4m.8 0h2.4m.8 0h2" stroke="#a2a2a2" stroke-width=".9" fill="none"/>
<rect x="897.7" y="73.7" width="13" height="13.8" rx=".8"/>
<path d="M899.8 76.5h3.6m.8 0h1.4m.8 0h1.8M899.8 78.5h1.6m.8 0h3m1.2 0h1M899.8 80.5h2.4m.8 0h2.4m.8 0h2M899.8 82.5h1.8m.8 0h2.8m1 0h1.2M899.8 84.5h2.4m.8 0h2.4m.8 0h2" stroke="#a2a2a2" stroke-width=".9" fill="none"/>
</g>
<!-- paste -->
<rect x="923.6" y="66.8" width="17.6" height="19.4" rx="1.6" fill="#dcd3a8" stroke="#000" stroke-width="1.3"/>
<path d="M925.5 72.5h14M925.5 75h14M925.5 77.5h14M925.5 80h14M925.5 82.5h14" stroke="#bcb286" stroke-width="1"/>
<path d="M928.2 71.2V70.2Q928.2 69.3 929.2 69L930.6 68.4Q930.5 65.2 932.5 65.2Q934.5 65.2 934.4 68.4L935.8 69Q936.8 69.3 936.8 70.2V71.2Z" fill="#d4d4d4" stroke="#1a1a1a" stroke-width=".9" stroke-linejoin="round"/>
<circle cx="932.5" cy="67.2" r=".8" fill="#777"/>
<rect x="931.1" y="73.6" width="13.5" height="13.8" rx="1.1" fill="#fff" stroke="#000" stroke-width="1.2"/>
<path d="M933 76.5h3.6m1.6 0h1m1 0h1.6M933 78.5h1.6m.8 0h3m1.4 0h1M933 80.5h2.4m.8 0h2.6m1.2 0h1.6M933 82.5h1.6m.8 0h3m1.4 0h1M933 84.5h2.4m.8 0h2.6m1.2 0h1.6" stroke="#66727f" stroke-width=".95" fill="none"/>
<!-- search -->
<path d="M973 66.4H984.4L990.8 72.7V86.3Q990.8 87.4 989.7 87.4H973Q971.6 87.4 971.6 86.1V67.7Q971.6 66.4 973 66.4Z" fill="url(#gp)" stroke="#000" stroke-width="1.5" stroke-linejoin="round"/>
<path d="M984.4 66.4V72.7H990.8Z" fill="#fff" stroke="#000" stroke-width="1.1" stroke-linejoin="round"/>
<circle cx="978.6" cy="75.7" r="3.5" fill="#dfe1d6" stroke="#4a4a44" stroke-width="1.3"/>
<path d="M981.5 78.6L986 83" stroke="#000" stroke-width="2.3" stroke-linecap="round"/>
</svg>
</div>
  <div id="ebody" class="abs"></div>
  <svg class="abs" style="left:1px;top:95px" width="16" height="562" viewBox="626 96 16 562">
<rect x="626" y="96" width="16" height="561" fill="#f2f2f2"/><rect x="626" y="96" width="14.4" height="561" fill="#bebebe"/>
<path d="M626 657V96H642V98H628V656Z" fill="#6f6f6f"/>
<path d="M628 657H642" stroke="#ececec" stroke-width="1"/>
<path d="M634.7 98.4L639.6 110.4H629Z" fill="#c6c6c6"/>
<path d="M634.5 98.6L629.2 110" stroke="#f0f0f0" stroke-width="1.2"/>
<path d="M635 98.6L639.6 110.3H629" stroke="#6f6f6f" stroke-width="1.3" fill="none"/>
<rect x="628.6" y="111.6" width="11.4" height="528" fill="#c2c2c2"/>
<path d="M629.3 639.4V112.3H639.5" stroke="#ececec" stroke-width="1.4" fill="none"/>
<path d="M639.1 112.5V639H629.2" stroke="#6f6f6f" stroke-width="1.6" fill="none"/>
<path d="M629 641.8H639.8L634.6 655.2Z" fill="#c6c6c6"/>
<path d="M634.4 655L629 641.8H639.6" stroke="#ececec" stroke-width="1.2" fill="none"/>
<path d="M639.6 642.2L634.8 655" stroke="#6f6f6f" stroke-width="1.3"/>
</svg>
  <div id="efringeL" class="abs"></div>
  <svg class="abs" style="left:1px;top:674px" width="16" height="17" viewBox="626 675 16 17">
<rect x="626" y="675" width="15" height="16.5" fill="#c2c2c2"/>
<path d="M626 691.5V675H641V676.6H627.6V690.5Z" fill="#6f6f6f"/>
<path d="M629 677.5L638.5 689.5M638.5 677.5L629 689.5M628.5 689.7H640" stroke="#6f6f6f" stroke-width="1.3" fill="none"/>
<path d="M630.5 677.5L634 682M629.2 688.5L633 683.8" stroke="#f0f0f0" stroke-width="1.1" fill="none"/>
</svg>
  <div class="abs" style="left:17px;top:674px;width:8px;height:17px;background:#f2f2f2"></div>
  <div id="efringeR" class="abs"></div>
  <div id="ecode" class="abs"><div class="ln"><span class="k">import</span> numpy</div><div class="ln"><span class="k">import</span> matplotlib <span class="k">as</span> plt</div><div class="ln"><span class="k">import</span> matplotlib.pyplot <span class="k">as</span> plt</div><div class="ln"></div><div class="ln"><span class="k">def</span> <span class="f">prime</span>(atester):</div><div class="ln">  <span class="v">pastrouve</span> = <span class="c">True</span></div><div class="ln">  <span class="v">k</span> = 2</div><div class="ln">  <span class="k">if</span> (atester == 1): <span class="k">return</span> <span class="c">False</span></div><div class="ln">  <span class="k">if</span> (atester == 2): <span class="k">return</span> <span class="c">True</span></div><div class="ln">  <span class="k">if</span> (atester == 3): <span class="k">return</span> <span class="c">True</span></div><div class="ln">  <span class="k">if</span> (atester == 5): <span class="k">return</span> <span class="c">True</span></div><div class="ln">  <span class="k">if</span> (atester == 7): <span class="k">return</span> <span class="c">True</span></div><div class="ln">  <span class="k">while</span> (pastrouve):</div><div class="ln">    <span class="k">if</span> ((k * k) &gt; atester):</div><div class="ln">        <span class="k">return</span> <span class="c">True</span></div><div class="ln">    <span class="k">else</span>:</div><div class="ln">        <span class="k">if</span> ((atester % k) == 0):</div><div class="ln">            <span class="k">return</span> <span class="c">False</span></div><div class="ln">        <span class="k">else</span>: <span class="v">k</span>=k+1</div><div class="ln"></div><div class="ln"><span class="k">def</span> <span class="f">comete_goldbach</span>(nmax):</div><div class="ln">    <span class="v">C</span> = numpy.zeros(nmax)</div><div class="ln">    <span class="k">for</span> n <span class="k">in</span> <span class="b">range</span>(4,nmax):</div><div class="ln">      <span class="k">for</span> x <span class="k">in</span> <span class="b">range</span>(3,n/2):</div><div class="ln">         <span class="k">if</span> (prime(x)) <span class="k">and</span> (prime(n-x)):</div><div class="ln">           <span class="v">C</span>[n] = C[n]+1</div><div class="ln">    <span class="k">return</span> C</div><div class="ln"></div><div class="ln"><span class="v">C</span> = comete_goldbach(2000)</div><div class="ln">plt.plot(C,<span class="s">'.'</span>,ms=1)<i class="cur"></i></div><div class="ln">plt.show()</div></div>
  <div id="emode" class="abs"> U:**-  <b>mongc.py</b>       All L30    (Python)</div>
</div>
</body>
</html>
